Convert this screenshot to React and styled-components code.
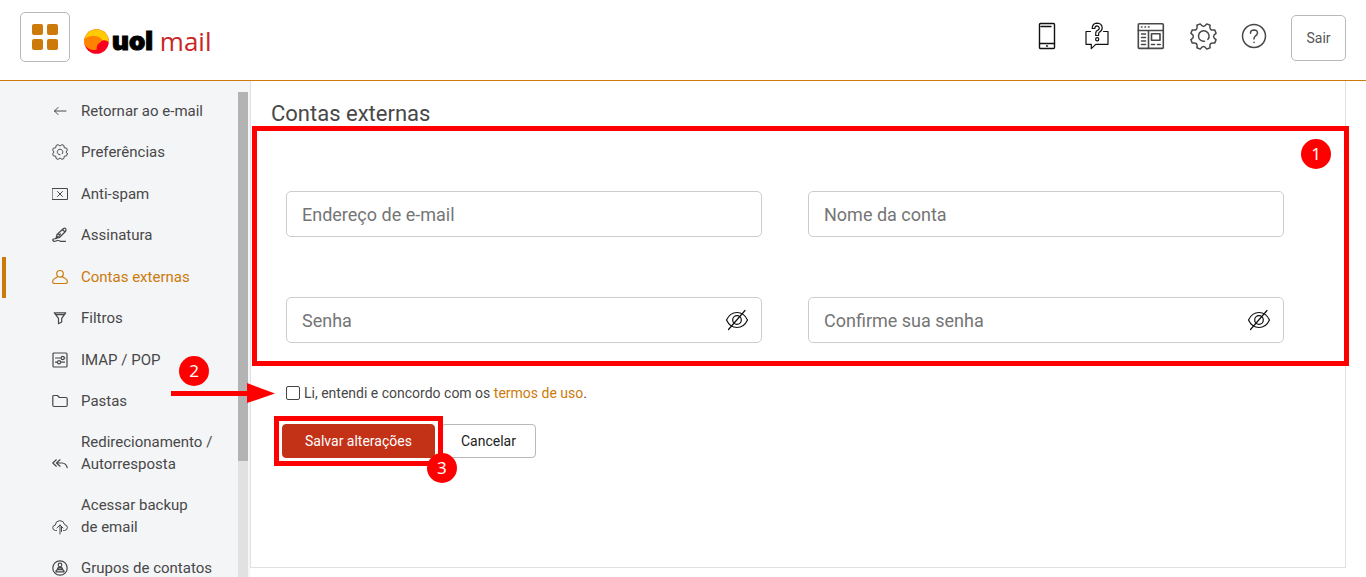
import React, { useState } from 'react'
import styled, { createGlobalStyle } from 'styled-components'

const ORANGE = '#cc7a0a'
const RED = '#ff0000'

// toothed outline: flat tips joined by round scoops
const gearPath = (c, r, dip) => {
  const p = (radius, deg) => {
    const a = (deg * Math.PI) / 180
    return `${(c + radius * Math.cos(a)).toFixed(2)} ${(c + radius * Math.sin(a)).toFixed(2)}`
  }
  let d = `M${p(r, 14)}`
  for (let i = 0; i < 8; i++) {
    const a = i * 45 + 22.5
    d += `L${p(r, a + 8)}Q${p(dip, a + 22.5)} ${p(r, a + 37)}`
  }
  return d + 'Z'
}

const Svg = ({ w = 16, h = 16, sw = 1, children }) => (
  <svg width={w} height={h} viewBox={`0 0 ${w} ${h}`} fill="none" stroke="currentColor" strokeWidth={sw} strokeLinejoin="round" strokeLinecap="round" aria-hidden="true">
    {children}
  </svg>
)

const icons = {
  back: <Svg><path d="M14 8H2.5M6 4.5L2.5 8L6 11.5" /></Svg>,
  gear: <Svg><path d={gearPath(8, 7.6, 4.6)} /><path d="M10.3 9.7A2.8 2.8 0 1 0 8 10.8" /></Svg>,
  spam: <Svg><path d="M.5 2.5H15.5V13.5H.5ZM5.5 5.5L10.5 10.5M10.5 5.5L5.5 10.5" /></Svg>,
  pen: <Svg sw={1.2}><path d="M4 11.5L5 7.5L11.5 1.5Q13.5.5 14 2.5Q14 3.5 13.4 4.5L7.5 10.5ZM4 11.5L8.5 7M10.5 2.5L13 5M6 6.5L8.5 9.5M3.5 11.5Q0 12 1 13.7Q2 15 4.5 13.8Q6.5 13 8.5 14.3H13.5" /></Svg>,
  user: <Svg sw={1.2}><circle cx="8" cy="4.8" r="3.3" /><path d="M5.5 7.2Q5.5 8.6 3.3 9.2Q.8 10 .6 12.5Q.6 14.5 2.3 14.5H13.7Q15.4 14.5 15.4 12.5Q15.2 10 12.7 9.2Q10.5 8.6 10.5 7.2" /></Svg>,
  filter: <Svg sw={1.2}><path d="M2.3 2.8H13.7L9.7 8.3V12L6.5 13.7V8.3ZM3.6 4.6H12.4" /></Svg>,
  sliders: <Svg sw={1.2}><rect x="1" y="1" width="14" height="14" rx="1" /><path d="M3.5 6H9M12.3 6H13M3.5 10.2H5.2M8.8 10.2H12.5" /><circle cx="10.7" cy="6" r="1.6" /><circle cx="7" cy="10.2" r="1.6" /></Svg>,
  folder: <Svg sw={1.2}><path d="M.8 3.6Q.8 2.5 2 2.5H5.5L7.3 4.5H14Q15.2 4.5 15.2 5.7V12.3Q15.2 13.5 14 13.5H2Q.8 13.5 .8 12.3Z" /></Svg>,
  reply: <Svg sw={1.2}><path d="M4.3 3.8L.8 7L4.3 10.2M8 3.8L4.5 7L8 10.2M4.7 7H10Q14.3 7.3 15.2 11.6" /></Svg>,
  cloud: <Svg><path d="M4.5 11.5H3.5Q.7 11.2 .7 8.6Q1 6.3 3.2 6.2Q3.5 2 7.7 1.6Q11.7 1.6 12.6 5.6Q15.3 6 15.4 8.5Q15.2 11.3 12.5 11.5H11.5M8 15V6M5 9L8 6L11 9M9.5 8V12.5" /></Svg>,
  group: <Svg sw={1.2}><circle cx="8" cy="8" r="7.2" /><circle cx="8" cy="5" r="1.8" /><path d="M5.4 9.2Q5.6 7.4 8 7.4Q10.4 7.4 10.6 9.2ZM3.9 11.9Q4 10.2 5.4 9.6H10.6Q12 10.2 12.1 11.9Z" /></Svg>,
}

const menu = [
  { icon: 'back', lines: ['Retornar ao e-mail'] },
  { icon: 'gear', lines: ['Preferências'] },
  { icon: 'spam', lines: ['Anti-spam'] },
  { icon: 'pen', lines: ['Assinatura'] },
  { icon: 'user', lines: ['Contas externas'], active: true },
  { icon: 'filter', lines: ['Filtros'] },
  { icon: 'sliders', lines: ['IMAP / POP'] },
  { icon: 'folder', lines: ['Pastas'] },
  { icon: 'reply', lines: ['Redirecionamento /', 'Autorresposta'] },
  { icon: 'cloud', lines: ['Acessar backup', 'de email'] },
  { icon: 'group', lines: ['Grupos de contatos'] },
]

const tools = [
  {
    label: 'Celular',
    dark: true,
    icon: (
      <Svg w={24} h={28} sw={1.4}>
        <rect x="2.5" y="1.5" width="15" height="25" rx="1" />
        <path d="M4 4.5H14M2.5 21.5H17.5M9.5 24H10.5" />
      </Svg>
    ),
  },
  {
    label: 'Fale conosco',
    dark: true,
    icon: (
      <Svg w={28} h={28} sw={1.2}>
        <path d="M5.5 9.5H1V22.3H6.3V26.7L10.7 22.3H23V9.5H18.5" />
        <path d="M7.2 6.5Q7.4 1.3 12 1.2Q17 1.3 17.2 6Q17.1 9 14 10.5Q13.6 10.8 13.6 13.5H10.7Q10.5 10 11.5 9Q14.4 7.8 14.3 6Q14 3.9 12 3.9Q10 4 9.8 6.5Z" />
        <circle cx="12.2" cy="17.2" r="1.6" />
      </Svg>
    ),
  },
  {
    label: 'Notícias',
    icon: (
      <Svg w={28} h={28} sw={1.6}>
        <rect x="1.3" y="1.8" width="25" height="24.6" rx="1" />
        <path d="M1.3 8.5H26.3M11.5 8.5V26.4M4.5 5H5M8 5H8.5M11.5 5H12M4.5 12H8.5M4.5 15.5H8.5M4.5 19H8.5M4.5 22.5H8.5M14.5 22.5H17.5M20.5 22.5H23.2" />
        <rect x="14.5" y="11.7" width="8.5" height="6.6" />
      </Svg>
    ),
  },
  {
    label: 'Configurações',
    icon: (
      <Svg w={28} h={28} sw={1.5}>
        <path d={gearPath(14.5, 13, 7.6)} />
        <path d="M18.9 17.4A5.3 5.3 0 1 0 15.5 19.3" />
      </Svg>
    ),
  },
  {
    label: 'Ajuda',
    icon: (
      <Svg w={26} h={28} sw={1.5}>
        <circle cx="13" cy="14" r="11.5" />
        <path d="M9.5 11.2Q9.6 8 13 8Q16.5 8.1 16.5 11Q16.4 12.8 14.4 14Q13 15 13 17M13 20.2V20.6" />
      </Svg>
    ),
  },
]

const Global = createGlobalStyle`
  * { box-sizing: border-box; }
  body {
    margin: 0;
    background: #fff;
    color: #484848;
    font-family: Roboto, "Open Sans", sans-serif;
  }
  button, input { font-family: inherit; }
`

const Page = styled.div`
  display: flex;
  flex-direction: column;
  height: 100vh;
  overflow: hidden;
`

const Header = styled.header`
  display: flex;
  align-items: center;
  flex: none;
  height: 81px;
  padding: 0 20px 6px;
  border-bottom: 1px solid ${ORANGE};
`

const AppsButton = styled.button`
  display: grid;
  grid-template-columns: 11px 11px;
  grid-auto-rows: 11px;
  gap: 4px;
  place-content: center;
  width: 50px;
  height: 50px;
  padding: 0;
  background: #fff;
  border: 1px solid #b8b8b8;
  border-radius: 5px;
`

const Square = styled.span`
  background: ${ORANGE};
  border-radius: 2px;
`

const Logo = styled.a`
  display: flex;
  align-items: center;
  margin-left: 14px;
  padding-top: 8px;
  text-decoration: none;
  line-height: 30px;
`

const Uol = styled.span`
  margin-left: 3px;
  color: #000;
  font-family: Inter, sans-serif;
  font-size: 26px;
  font-weight: 900;
  -webkit-text-stroke: 1px #000;
`

const Mail = styled.span`
  margin-left: 7px;
  color: #c92626;
  font-family: "Open Sans", sans-serif;
  font-size: 26px;
`

const Tools = styled.div`
  display: flex;
  align-items: center;
  gap: 24px;
  margin-left: auto;
  padding-top: 2px;
`

const ToolButton = styled.button`
  display: flex;
  padding: 0 0 4px;
  background: none;
  border: 0;
  color: ${(p) => (p.$dark ? '#111' : '#484848')};
`

const Exit = styled.button`
  width: 55px;
  height: 46px;
  padding: 0;
  background: #fff;
  border: 1px solid #b8b8b8;
  border-radius: 5px;
  color: #555;
  font-size: 14px;
`

const Body = styled.div`
  display: flex;
  flex: 1;
  min-height: 0;
`

const Sidebar = styled.aside`
  display: flex;
  flex: none;
  width: 250px;
  padding-right: 2px;
  background: #f4f5f7;
`

const Menu = styled.ul`
  flex: 1;
  margin: 0;
  padding: 9px 0 0;
  overflow: hidden;
  list-style: none;
`

const MenuItem = styled.li`
  &:nth-child(odd):nth-child(-n + 7) { margin-top: 1px; }
`

const MenuLink = styled.a`
  display: flex;
  align-items: flex-end;
  gap: 13px;
  margin-left: 2px;
  padding: 9px 0 10px 46px;
  border-left: 4px solid ${(p) => (p.$active ? ORANGE : 'transparent')};
  color: ${(p) => (p.$active ? ORANGE : '#484848')};
  font-size: 15px;
  line-height: 22px;
  text-decoration: none;
  white-space: nowrap;

  svg { flex: none; margin-bottom: 3px; }
`

const Line = styled.span`
  display: block;
`

const Track = styled.div`
  width: 10px;
  margin-top: 11px;
  background: #e1e1e1;
`

const Thumb = styled.div`
  height: 76%;
  background: #b3b3b3;
`

const Main = styled.main`
  display: flex;
  flex: 1;
  min-width: 0;
  padding: 0 20px 9px 0;
`

const Card = styled.section`
  flex: 1;
  min-width: 0;
  padding-top: 20px;
  border: 1px solid #e0e0e0;
  border-top: 0;
`

const Title = styled.h1`
  margin: 0 20px;
  font-size: 22px;
  font-weight: 400;
  line-height: 25px;
`

const Fields = styled.div`
  position: relative;
  display: grid;
  grid-template-columns: 1fr 1fr;
  gap: 60px 46px;
  padding: 65px 61px 23px 35px;
`

const Field = styled.div`
  display: flex;
  align-items: center;
  height: 46px;
  padding: 0 12px 0 15px;
  border: 1px solid #ccc;
  border-radius: 5px;
`

const Input = styled.input`
  flex: 1;
  min-width: 0;
  padding: 0;
  background: none;
  border: 0;
  outline: 0;
  color: #484848;
  font-size: 18px;

  &::placeholder { color: #757575; opacity: 1; }
`

const EyeButton = styled.button`
  display: flex;
  padding: 0;
  background: none;
  border: 0;
  color: #111;
`

const Terms = styled.div`
  position: relative;
  display: flex;
  align-items: center;
  gap: 4px;
  margin-top: 16px;
  padding-left: 35px;
  font-size: 14px;
  line-height: 22px;

  a { color: ${ORANGE}; text-decoration: none; }
`

const Check = styled.input`
  appearance: none;
  width: 14px;
  height: 14px;
  margin: 0;
  background: #fff;
  border: 1px solid #444;
  border-radius: 2px;

  &:checked { background: ${ORANGE}; }
`

const Actions = styled.div`
  display: flex;
  gap: 6px;
  margin-top: 20px;
  padding-left: 31px;
`

const SaveSlot = styled.div`
  position: relative;
`

const Button = styled.button`
  height: 34px;
  padding: 0 ${(p) => (p.$primary ? 22 : 19)}px;
  background: ${(p) => (p.$primary ? '#c33116' : '#fff')};
  border: 1px solid ${(p) => (p.$primary ? '#c33116' : '#b8b8b8')};
  border-radius: 4px;
  color: ${(p) => (p.$primary ? '#fff' : '#222')};
  font-size: 14px;
`

// tutorial marks, they lie over the form
const Frame = styled.div`
  position: absolute;
  inset: ${(p) => p.$inset};
  border: 5px solid ${RED};
  pointer-events: none;
`

const Badge = styled.span`
  position: absolute;
  width: 30px;
  height: 30px;
  background: ${RED};
  border-radius: 50%;
  color: #fff;
  font-family: "Noto Sans", sans-serif;
  font-size: 17px;
  line-height: 30px;
  text-align: center;
`

const FormBadge = styled(Badge)`
  top: 13px;
  right: 14px;
`

const TermsBadge = styled(Badge)`
  top: -26px;
  left: -72px;
`

const SaveBadge = styled(Badge)`
  right: -22px;
  bottom: -25px;
`

const Arrow = styled.svg`
  position: absolute;
  top: 1px;
  left: -80px;
`

const Sphere = () => (
  <svg width="25" height="25" viewBox="0 0 25 25" aria-hidden="true">
    <defs>
      <clipPath id="ball"><circle cx="12.5" cy="12.5" r="12.3" /></clipPath>
    </defs>
    <g clipPath="url(#ball)">
      <rect width="25" height="25" fill="#f9001c" />
      <path d="M0 0H25V13.5Q22 10.5 18 11.6L8 20L0 15Z" fill="#ffcb05" />
      <path d="M0 10Q4 7 9 6.8Q16 7 18.5 11.6Q12.5 13.5 12.5 20.8Q5 22.5 0 15Z" fill="#ff8200" />
    </g>
  </svg>
)

const Eye = () => (
  <Svg w={24} h={24} sw={1.2}>
    <path d="M1.5 12Q5 4.5 12 4.5Q19 4.5 22.5 12Q19 19.5 12 19.5Q5 19.5 1.5 12ZM3.5 21.5L20 2.5" />
    <circle cx="12" cy="12" r="4.3" />
  </Svg>
)

const TextField = ({ label, type = 'text' }) => {
  const [visible, setVisible] = useState(false)
  const secret = type === 'password'

  return (
    <Field>
      <Input type={secret && visible ? 'text' : type} placeholder={label} aria-label={label} />
      {secret && (
        <EyeButton type="button" aria-label="Mostrar senha" onClick={() => setVisible(!visible)}>
          <Eye />
        </EyeButton>
      )}
    </Field>
  )
}

export default function App() {
  return (
    <Page>
      <Global />
      <Header>
        <AppsButton aria-label="Aplicativos">
          <Square /><Square /><Square /><Square />
        </AppsButton>
        <Logo href="#">
          <Sphere />
          <Uol>uol</Uol>
          <Mail>mail</Mail>
        </Logo>
        <Tools>
          {tools.map((t) => (
            <ToolButton key={t.label} aria-label={t.label} $dark={t.dark}>{t.icon}</ToolButton>
          ))}
          <Exit>Sair</Exit>
        </Tools>
      </Header>
      <Body>
        <Sidebar>
          <Menu>
            {menu.map((m) => (
              <MenuItem key={m.icon}>
                <MenuLink href="#" $active={m.active}>
                  {icons[m.icon]}
                  <span>{m.lines.map((l) => <Line key={l}>{l}</Line>)}</span>
                </MenuLink>
              </MenuItem>
            ))}
          </Menu>
          <Track><Thumb /></Track>
        </Sidebar>
        <Main>
          <Card>
            <Title>Contas externas</Title>
            <Fields>
              <TextField label="Endereço de e-mail" />
              <TextField label="Nome da conta" />
              <TextField label="Senha" type="password" />
              <TextField label="Confirme sua senha" type="password" />
              <Frame $inset="0 -4px 0 1px" />
              <FormBadge>1</FormBadge>
            </Fields>
            <Terms>
              <Check type="checkbox" id="terms" />
              <label htmlFor="terms">Li, entendi e concordo com os <a href="#">termos de uso</a>.</label>
              <TermsBadge>2</TermsBadge>
              <Arrow width="104" height="20" viewBox="0 0 104 20" fill={RED} aria-hidden="true">
                <path d="M0 8H76V0L104 10.5L76 20V13H0Z" />
              </Arrow>
            </Terms>
            <Actions>
              <SaveSlot>
                <Button $primary>Salvar alterações</Button>
                <Frame $inset="-8px" />
                <SaveBadge>3</SaveBadge>
              </SaveSlot>
              <Button>Cancelar</Button>
            </Actions>
          </Card>
        </Main>
      </Body>
    </Page>
  )
}
